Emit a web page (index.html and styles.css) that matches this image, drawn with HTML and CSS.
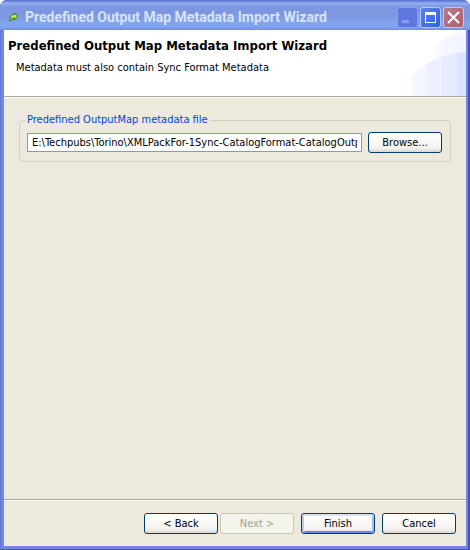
FILE: index.html
```
<!DOCTYPE html>
<html lang="en">
<head>
<meta charset="UTF-8">
<title>Predefined Output Map Metadata Import Wizard</title>
<link rel="stylesheet" href="styles.css">
</head>
<body>
<div class="window">
  <div class="titlebar">
    <svg class="app-icon" width="10" height="10" viewBox="0 0 10 10" aria-hidden="true">
      <path d="M1 9V5l2-2h2V1l4 3-4 4V6H4L3 8z" fill="#b5dc32" stroke="#287a3c" stroke-width="1"/>
      <path d="M3 4h4" stroke="#f2f26a"/>
    </svg>
    <span class="title">Predefined Output Map Metadata Import Wizard</span>
    <div class="controls">
      <button class="ctl minimize" aria-label="Minimize" disabled>
        <svg width="19" height="19" viewBox="0 0 19 19"><path d="M4 12h7v3H4z" fill="#8f9df0"/></svg>
      </button>
      <button class="ctl maximize" aria-label="Maximize">
        <svg width="19" height="19" viewBox="0 0 19 19"><path d="M4 4h11v11H4zM5 7v7h9V7z" fill="#fff" fill-rule="evenodd"/></svg>
      </button>
      <button class="ctl close" aria-label="Close">
        <svg width="19" height="19" viewBox="0 0 19 19"><path d="M4 4l11 11M15 4L4 15" stroke="#fff" stroke-width="2"/></svg>
      </button>
    </div>
  </div>

  <form class="wizard">
    <div class="header">
      <svg class="banner" width="54" height="66" viewBox="0 0 54 66" aria-hidden="true">
        <path d="M0 66V46Q8 37 15 33Q21 30 23 29V17Q33 5 54 1V66z" fill="#f9faff"/>
        <path d="M15 66V33Q21 29 30 26V11Q40 4 54 1V66z" fill="#f5f7ff"/>
        <path d="M30 66V26L45 23V5L54 1V66z" fill="#f2f5ff"/>
        <path d="M0 66V46Q18 27 54 22V66z" fill="#f4f6ff"/>
        <path d="M15 66V34Q30 25 54 22V66z" fill="#edf1ff"/>
        <path d="M30 66V27Q40 23 54 22V66z" fill="#e6ecff"/>
        <path d="M45 66V23L54 22V66z" fill="#dce5ff"/>
      </svg>
      <h1>Predefined Output Map Metadata Import Wizard</h1>
      <p>Metadata must also contain Sync Format Metadata</p>
    </div>

    <div class="content">
      <fieldset class="group">
        <legend><label for="file">Predefined OutputMap metadata file</label></legend>
        <div class="file-row">
          <input type="text" id="file" value="E:\Techpubs\Torino\XMLPackFor-1Sync-CatalogFormat-CatalogOutput.xml">
          <button type="button" class="btn">Browse...</button>
        </div>
      </fieldset>
    </div>

    <div class="footer">
      <div class="nav">
        <button type="button" class="btn">&lt; Back</button>
        <button type="button" class="btn" disabled>Next &gt;</button>
      </div>
      <button type="submit" class="btn default">Finish</button>
      <button type="button" class="btn">Cancel</button>
    </div>
  </form>
</div>
</body>
</html>
```
FILE: styles.css
```
* {
  box-sizing: border-box;
}

body {
  margin: 0;
  background: #fff;
  color: #000;
  font-family: Tahoma, "DejaVu Sans Condensed", "DejaVu Sans", sans-serif;
  font-size: 11px;
  line-height: 14px;
}

button, input {
  font: inherit;
  color: inherit;
}

/* window frame */
.window {
  display: flex;
  flex-direction: column;
  min-height: 100vh;
  padding: 0 4px 4px;
  background: #7486e1;
  border-radius: 7px 7px 0 0;
  box-shadow: inset 1px 0 #6075d4, inset -2px -1px #4a50b4;
}

.titlebar {
  display: flex;
  align-items: center;
  height: 30px;
  margin: 0 -4px;
  padding: 4px 6px 0 9px;
  border-radius: 7px 7px 0 0;
  background: linear-gradient(#6078d4 0, #6078d4 1px, #93aef0 3px, #7d97e0 7px, #7c96df 14px, #82a6ee 24px, #80a2ec 27px, #738ddb 30px);
}

.app-icon {
  margin-right: 6px;
}

.title {
  flex: 1;
  color: #d8e4f8;
  font-family: "Trebuchet MS", Roboto, sans-serif;
  font-size: 14px;
  font-weight: bold;
  line-height: 18px;
  white-space: nowrap;
}

.controls {
  display: flex;
  gap: 2px;
}

.ctl {
  width: 21px;
  height: 21px;
  padding: 0;
  border: 1px solid #b6c8f5;
  border-radius: 3px;
  background: linear-gradient(135deg, #5b82ed, #3260e2);
}

.ctl svg {
  display: block;
}

.ctl.minimize {
  border-color: #8ca0ec;
  background: #5c78df;
}

.ctl.close {
  border-color: #d2c3e0;
  background: linear-gradient(135deg, #b8798b, #ad6072);
}

/* wizard */
.wizard {
  flex: 1;
  display: flex;
  flex-direction: column;
  background: #ede9dc;
}

.header {
  position: relative;
  height: 68px;
  padding: 8px 4px;
  background: #fff;
  border-bottom: 1px solid #fff;
  box-shadow: inset 0 -1px #aca899;
}

.banner {
  position: absolute;
  top: 0;
  right: 0;
}

.header h1 {
  position: relative;
  margin: 0;
  font-size: 13px;
  line-height: 16px;
  white-space: nowrap;
}

.header p {
  position: relative;
  margin: 7px 8px 0;
}

.content {
  flex: 1;
  padding: 15px;
}

.group {
  min-width: 0;
  margin: 0;
  padding: 5px 8px 8px 7px;
  border: 1px solid #d0d0bf;
  border-radius: 4px;
}

.group legend {
  margin-left: -2px;
  padding: 0 2px;
  color: #0046d5;
}

.file-row {
  display: flex;
  align-items: center;
  gap: 6px;
}

.file-row input {
  flex: 1;
  min-width: 0;
  height: 19px;
  padding: 0 4px;
  border: 1px solid #7f9db9;
  background: #fff;
}

.btn {
  width: 74px;
  height: 21px;
  padding: 0;
  border: 1px solid #003c74;
  border-radius: 3px;
  background: linear-gradient(#fff, #f4f3ef 80%, #dcd6cc);
}

.btn.default {
  box-shadow: inset 0 2px #cee7ff, inset 2px 0 #b4ccf5, inset -2px 0 #a0bcf0, inset 0 -2px #6982ee;
}

.btn:disabled {
  border-color: #c9c7ba;
  background: #f5f4ea;
  color: #a1a192;
}

.footer {
  display: flex;
  justify-content: flex-end;
  gap: 7px;
  padding: 13px 10px 12px;
  border-top: 1px solid #aca899;
  box-shadow: inset 0 1px #fff;
}

.nav {
  display: flex;
  gap: 2px;
}
```
